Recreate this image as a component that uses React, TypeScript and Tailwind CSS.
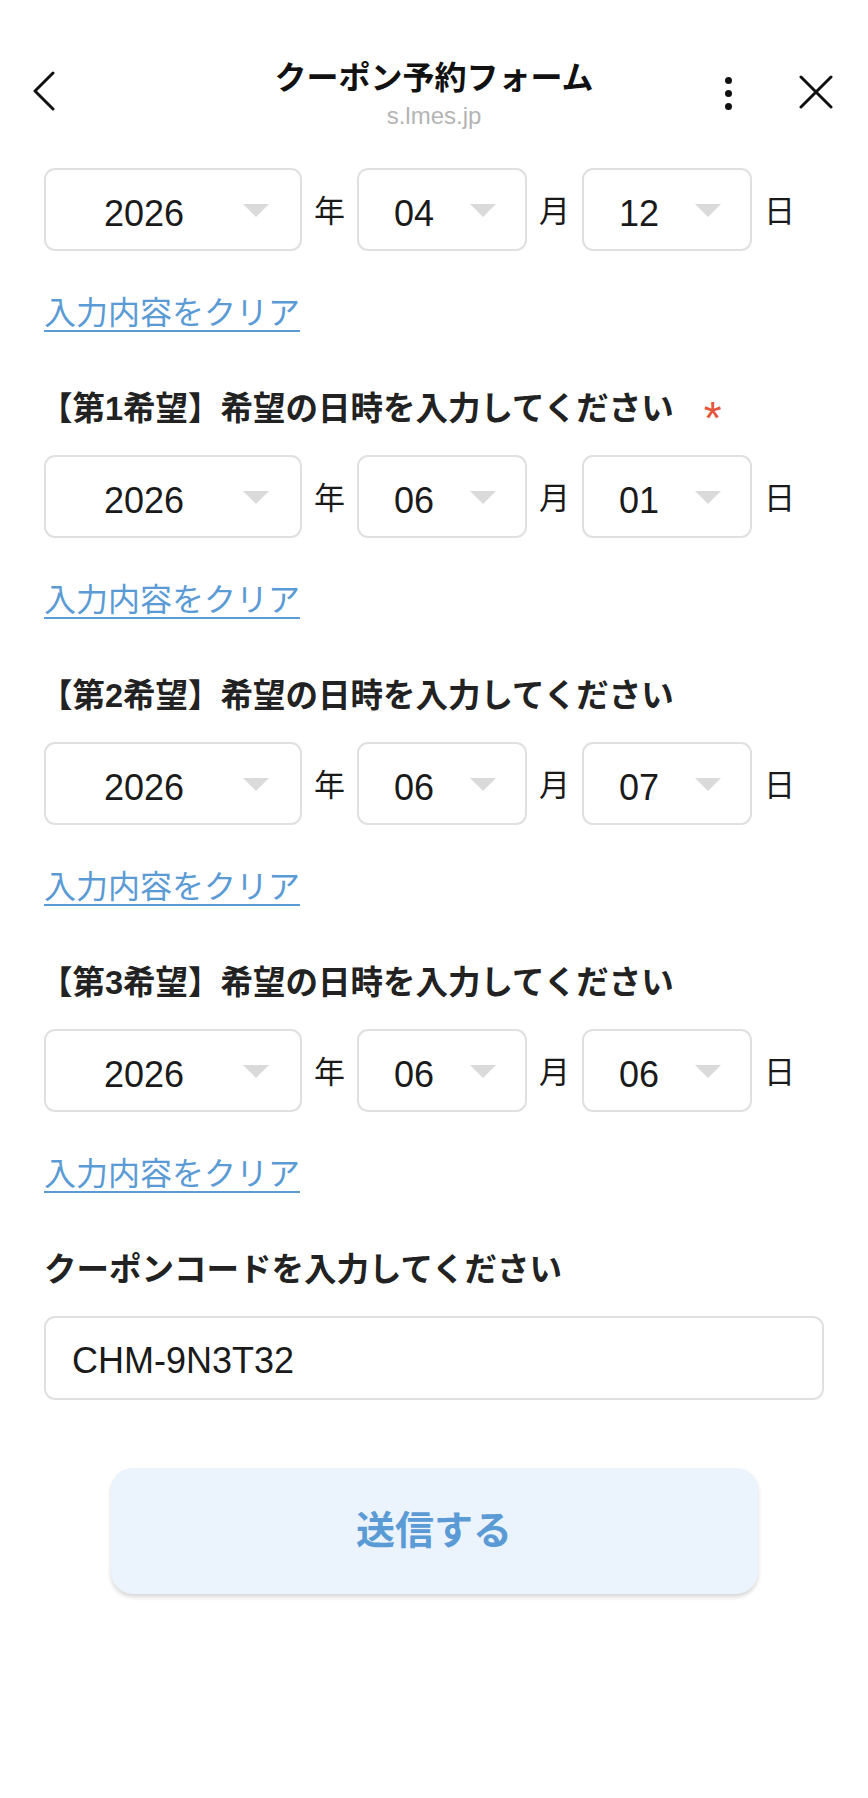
const FONT = { fontFamily: '"Liberation Sans", "Noto Sans CJK JP", sans-serif' };

function Arrow() {
  return (
    <svg width="28" height="15" viewBox="0 0 28 15" className="shrink-0 mt-[2px]">
      <path d="M1 1 L27 1 L14 14 Z" fill="#dadada" />
    </svg>
  );
}

function SelectBox({ value, wide }: { value: string; wide?: boolean }) {
  return (
    <div
      className={`flex items-center h-[83px] border-2 border-[#e0e0e0] rounded-[11px] bg-white ${
        wide ? "w-[258px] pr-[30px]" : "w-[170px] pr-[28px]"
      }`}
    >
      <span className="flex-1 text-center text-[36px] text-[#1a1a1a] pt-[8px]">{value}</span>
      <Arrow />
    </div>
  );
}

function DateRow({ y, m, d }: { y: string; m: string; d: string }) {
  return (
    <div className="flex items-center gap-3">
      <SelectBox value={y} wide />
      <span className="text-[31px] text-[#1a1a1a] w-[31px] pt-[6px]">年</span>
      <SelectBox value={m} />
      <span className="text-[31px] text-[#1a1a1a] w-[31px] pt-[6px]">月</span>
      <SelectBox value={d} />
      <span className="text-[31px] text-[#1a1a1a] w-[31px] pt-[6px]">日</span>
    </div>
  );
}

function ClearLink() {
  return (
    <div className="mt-[38px] h-[44px] leading-[44px] pt-[2px]">
      <a className="text-[32px] text-[#5b9bd5] underline decoration-2 underline-offset-[6px]">入力内容をクリア</a>
    </div>
  );
}

function Label({ text, required, bracket }: { text: string; required?: boolean; bracket?: boolean }) {
  return (
    <div className="mt-[52px] h-[44px] leading-[44px] flex items-center text-[32.5px] font-bold text-[#222] pt-[3px]">
      <span className={bracket ? "-ml-[4px]" : ""}>{text}</span>
      {required && (
        <span className="ml-[30px] text-[#e4553d] font-normal text-[46px] leading-none mt-[18px]">*</span>
      )}
    </div>
  );
}

export default function App() {
  const choices = [
    { label: "【第1希望】希望の日時を入力してください", req: true, y: "2026", m: "06", d: "01" },
    { label: "【第2希望】希望の日時を入力してください", req: false, y: "2026", m: "06", d: "07" },
    { label: "【第3希望】希望の日時を入力してください", req: false, y: "2026", m: "06", d: "06" },
  ];

  return (
    <div className="w-[868px] h-[1798px] bg-white" style={FONT}>
      {/* Header */}
      <header className="relative h-[140px]">
        <div className="absolute left-[32px] top-[71px]">
          <svg width="24" height="40" viewBox="0 0 24 40">
            <path d="M21 2 L3 20 L21 38" fill="none" stroke="#111" strokeWidth="3" strokeLinecap="round" strokeLinejoin="round" />
          </svg>
        </div>
        <div className="flex flex-col items-center pt-[56px]">
          <div className="text-[32px] font-bold text-[#111] leading-[40px] pt-[2px]">クーポン予約フォーム</div>
          <div className="text-[24px] text-[#b4b4b4] leading-[30px] mt-[3px]">s.lmes.jp</div>
        </div>
        <div className="absolute left-[725px] top-[77px] flex flex-col gap-[6px]">
          <span className="w-[7px] h-[7px] rounded-full bg-[#111]" />
          <span className="w-[7px] h-[7px] rounded-full bg-[#111]" />
          <span className="w-[7px] h-[7px] rounded-full bg-[#111]" />
        </div>
        <div className="absolute left-[799px] top-[75px]">
          <svg width="34" height="34" viewBox="0 0 34 34">
            <path d="M2 2 L32 32 M32 2 L2 32" fill="none" stroke="#111" strokeWidth="3" strokeLinecap="round" />
          </svg>
        </div>
      </header>

      <main className="px-[44px] pt-[28px]">
        <DateRow y="2026" m="04" d="12" />
        <ClearLink />

        {choices.map((c) => (
          <section key={c.label}>
            <Label text={c.label} required={c.req} bracket />
            <div className="mt-[26px]">
              <DateRow y={c.y} m={c.m} d={c.d} />
            </div>
            <ClearLink />
          </section>
        ))}

        <Label text="クーポンコードを入力してください" />
        <div className="mt-[26px] w-[780px] h-[84px] border-2 border-[#e0e0e0] rounded-[11px] flex items-center pl-[26px] pt-[6px] text-[36px] text-[#1a1a1a]">
          CHM-9N3T32
        </div>

        <div className="mt-[68px] flex justify-center">
          <button className="w-[647px] h-[126px] rounded-[22px] bg-[#ebf3fc] shadow-[0_3px_4px_rgba(0,0,0,0.16)] text-[39px] font-bold text-[#5b9bd5]">
            送信する
          </button>
        </div>
      </main>
    </div>
  );
}
